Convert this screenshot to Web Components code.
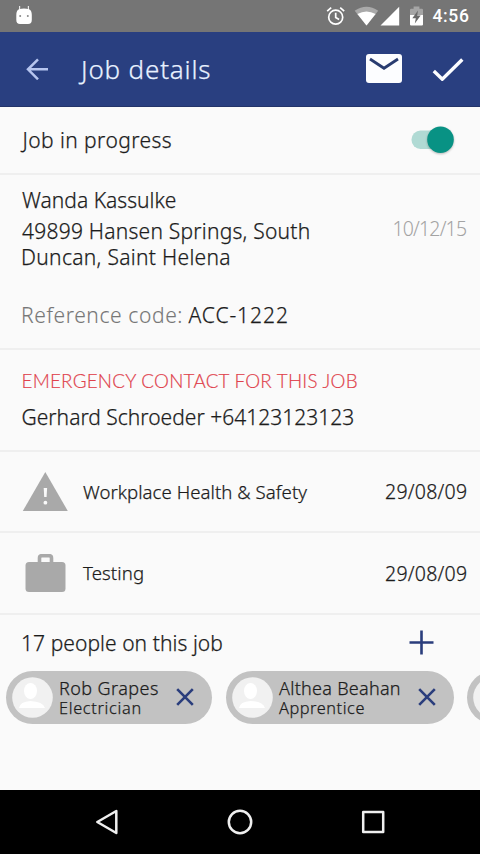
<!DOCTYPE html>
<html lang="en">
<head>
<meta charset="utf-8">
<title>Job details</title>
<style>
html,body{margin:0;height:100%;background:#fafafa;overflow:hidden}
</style>
</head>
<body>
<job-screen></job-screen>
<script>
const define = (name, html, setup) => customElements.define(name, class extends HTMLElement {
  connectedCallback() {
    if (this.shadowRoot) return;
    this.attachShadow({ mode: 'open' }).innerHTML = html;
    if (setup) setup(this, this.shadowRoot);
  }
});

/* One line of text whose tracking is spread so its glyphs span the given width. */
const pen = document.createElement('canvas').getContext('2d');
define('fit-text', `<style>
:host{display:flex;flex:none;white-space:pre;line-height:24px;color:#1c1c1c;-webkit-text-stroke:var(--stroke,.25px)}
span{display:block;flex:none}
</style><span></span>`, (el, root) => {
  const span = root.querySelector('span');
  const text = el.getAttribute('text');
  const size = +el.getAttribute('size');
  const weight = el.getAttribute('weight') || 300;
  const family = el.getAttribute('family') || '"Noto Sans"';
  const width = +el.getAttribute('width');
  span.textContent = text;
  span.style.font = `${weight} ${size}px ${family}, sans-serif`;
  span.style.lineHeight = 'inherit';
  span.style.letterSpacing = '0.01px';
  pen.font = `${weight} ${size}px ${family}, sans-serif`;
  const m = pen.measureText(text);
  const left = m.actualBoundingBoxLeft * 0.5;
  const bearings = m.width - m.actualBoundingBoxRight - left;
  const ink = span.getBoundingClientRect().width - bearings;
  span.style.letterSpacing = ((width - ink) / (text.length - 1)).toFixed(3) + 'px';
  span.style.marginLeft = left.toFixed(2) + 'px';
  el.style.width = width + 'px';
});

define('status-bar', `<style>
:host{display:flex;height:32px;background:#757575;align-items:center;box-sizing:border-box;padding:0 11px 0 16px}
svg{display:block;flex:none}
.gap{flex:1}
fit-text{color:#fff;--stroke:0}
</style>
<svg width="16" height="20" viewBox="0 0 16 20"><path d="M3.6 0v5M12.4 0v5" stroke="#e6e6e6" stroke-width="1.2"/><path d="M3 3.2Q8 2 13 3.2Q15.8 4.5 15.8 9V14Q15.8 18 12 18H4Q.3 18 .3 14V9Q.3 4.5 3 3.2Z" fill="#fff"/><circle cx="4.2" cy="10" r="1" fill="#888"/><circle cx="11.8" cy="10" r="1" fill="#888"/></svg>
<span class="gap"></span>
<svg width="148" height="32" viewBox="321 0 148 32" style="margin-right:-36.5px">
<g fill="none" stroke="#fff" stroke-width="1.7"><circle cx="335.7" cy="17.2" r="7"/><path d="M335.7 12.8v4.8l3.4 2M327.2 11.2l4-3.5M344.2 11.2l-4-3.5"/></g>
<path d="M354.7 10.8Q366.5 2.6 378.2 10.8L366.5 25.5Z" fill="#a9a9a9"/><path d="M357.4 14Q366.5 9 375.6 14L366.5 25.5Z" fill="#fff"/>
<path d="M380.5 25.5L399.2 6.8V25.5Z" fill="#fff"/>
<path d="M410 10Q410 8.8 411.2 8.8H413.6V6.6H419.4V8.8H421.8Q423 8.8 423 10V15H410Z" fill="#a5a5a5"/><path d="M410 15H423V24.5Q423 25.6 421.8 25.6H411.2Q410 25.6 410 24.5Z" fill="#fff"/><path d="M418 10.5L412.3 18.2H415.8L414.8 23.5L420.7 15.5H417.2Z" fill="#696969"/>
</svg>
<fit-text text="4:56" size="17.5" weight="500" family="Roboto" width="36.5"></fit-text>`);

define('app-bar', `<style>
:host{display:flex;height:74.5px;background:#293f80;align-items:center;box-sizing:border-box;padding:0 16px 0 26px;border-bottom:1px solid #233469}
svg{display:block;flex:none}
fit-text{color:#e8f1ff;margin-left:31.5px}
.gap{flex:1}
.check{margin-left:30px}
</style>
<svg width="22" height="22" viewBox="0 0 22 22" fill="none" stroke="#b6c5ef" stroke-width="2.5"><path d="M22 11.3H2M12 1.3L2 11.3L12 21.3"/></svg>
<fit-text text="Job details" size="26" width="130"></fit-text>
<span class="gap"></span>
<svg width="36" height="29" viewBox="0 0 36 29"><rect width="36" height="29" rx="3" fill="#fcfdff"/><path d="M4 5L18 14.2L32 5" fill="none" stroke="#293c70" stroke-width="2.8"/></svg>
<svg class="check" width="32" height="24" viewBox="0 0 32 24"><path d="M1.8 14L10.3 22.2L30.3 2.5" fill="none" stroke="#fcfdff" stroke-width="3.4"/></svg>`);

define('toggle-switch', `<style>
:host{display:block;flex:none;width:43px;height:30px}
svg{display:block;overflow:visible}
circle{filter:drop-shadow(0 1px 1px #0004)}
</style><svg width="43" height="30" viewBox="0 0 43 30"><rect x="-.5" y="5.5" width="36" height="18.5" rx="9" fill="#b0dad4"/><circle cx="28.5" cy="14.7" r="13.3" fill="#089284"/></svg>`);

define('list-section', `<style>
:host{display:flex;flex-direction:column;box-sizing:border-box;flex:none;border-bottom:2px solid #efefef;padding-left:22px;padding-right:14px}
</style><slot></slot>`);

define('record-row', `<style>
:host{display:flex;align-items:center;justify-content:space-between;flex:1}
div{display:flex;align-items:center;gap:15px}
.icon{width:46px;justify-content:center}
::slotted([slot=date]){margin-top:1.4px}
</style><div><div class="icon"><slot name="icon"></slot></div><slot></slot></div><slot name="date"></slot>`);

define('person-chip', `<style>
:host{display:flex;flex:none;box-sizing:border-box;height:53.5px;border-radius:27px;background:#c2c2c2;align-items:center;padding:0 18px 0 6px}
svg{display:block;flex:none}
.names{flex:1;margin:1.4px 0 0 6.5px;display:flex;flex-direction:column}
.names fit-text{line-height:20px;color:#1d1d1d}
</style>
<svg width="41" height="41" viewBox="0 0 41 41"><circle cx="20.5" cy="20.5" r="20.3" fill="#f1f1f1"/><g fill="#fff"><ellipse cx="18.5" cy="14" rx="6.5" ry="8"/><path d="M7 31Q8 24.5 18.5 24Q31 24.5 33 31Z"/></g></svg>
<div class="names"></div>
<svg width="18" height="18" viewBox="0 0 18 18"><path d="M1.2 1.2L16.8 16.8M16.8 1.2L1.2 16.8" stroke="#2a3d7c" stroke-width="2.6"/></svg>`, (el, root) => {
  const [name, nw, role, rw] = el.getAttribute('person').split('|');
  root.querySelector('.names').innerHTML = name ? `<fit-text text="${name}" size="18" width="${nw}"></fit-text><fit-text text="${role}" size="16.3" width="${rw}"></fit-text>` : '';
});

define('nav-bar', `<style>
:host{display:flex;height:64px;background:#000;align-items:center;justify-content:space-between;box-sizing:border-box;padding:0 95px}
svg{display:block}
g{fill:none;stroke:#efefef;stroke-width:2.5;stroke-linejoin:round}
</style>
<svg width="24" height="26" viewBox="0 0 24 26"><g><path d="M21.3 2V24L2.3 13Z"/></g></svg>
<svg width="26" height="26" viewBox="0 0 26 26"><g><circle cx="13" cy="13" r="11.2"/></g></svg>
<svg width="24" height="24" viewBox="0 0 24 24"><g><rect x="2.2" y="2" width="20" height="20"/></g></svg>`);

define('job-screen', `<style>
:host{display:flex;flex-direction:column;width:480px;height:854px;background:#fafafa;overflow:hidden}
.row{display:flex;justify-content:space-between;align-items:center}
.progress{height:68.5px;padding-right:25px;padding-top:18px}
.progress fit-text{margin-left:-.5px}
.detail{height:175px;padding-top:13px}
.head{height:82px}
.place{display:flex;flex-direction:column}
.place fit-text:first-child{margin-bottom:5.6px}
.place fit-text + fit-text{line-height:26px}
.muted{color:#a3a3a3;--stroke:0}
.label{color:#777;--stroke:.1px}
.ref{display:flex;gap:7px;margin-top:32.6px}
.emergency{height:102px;padding-top:18.8px;gap:12px}
.red{color:#e0424c;--stroke:.2px}
.health{height:81px}
.testing{height:82px}
.people{display:flex;justify-content:space-between;align-items:center;padding:15px 46px 0 22px;height:25px}
.chips{display:flex;gap:13.5px;padding-left:6px;margin-top:15.7px;overflow:hidden;flex:none}
.space{flex:1}
svg{display:block}
</style>
<status-bar></status-bar>
<app-bar></app-bar>
<list-section class="progress"><div class="row"><fit-text text="Job in progress" size="21" width="149.5"></fit-text><toggle-switch></toggle-switch></div></list-section>
<list-section class="detail">
<div class="row head"><div class="place"><fit-text text="Wanda Kassulke" size="21" width="154"></fit-text><fit-text text="49899 Hansen Springs, South" size="21" width="287"></fit-text><fit-text text="Duncan, Saint Helena" size="21" width="207.5"></fit-text></div><fit-text class="muted" text="10/12/15" size="19.5" width="73"></fit-text></div>
<div class="ref"><fit-text class="label" text="Reference code:" size="21" width="159.5"></fit-text><fit-text text="ACC-1222" size="21" width="98.5"></fit-text></div>
</list-section>
<list-section class="emergency"><fit-text class="red" text="EMERGENCY CONTACT FOR THIS JOB" size="18.8" family="Lato" width="335"></fit-text><fit-text text="Gerhard Schroeder +64123123123" size="21" width="331.5"></fit-text></list-section>
<list-section class="health"><record-row>
<svg slot="icon" width="46" height="40" viewBox="0 0 46 40"><path d="M23.3 0L45.8 39H.8Z" fill="#a9a9a9"/><path d="M21.7 16h3.4l-.5 9h-2.4z" fill="#fafafa"/><circle cx="23.4" cy="30.7" r="1.9" fill="#fafafa"/></svg>
<fit-text text="Workplace Health &amp; Safety" size="18.6" width="224.5"></fit-text><fit-text slot="date" text="29/08/09" size="19.5" width="80.5"></fit-text></record-row></list-section>
<list-section class="testing"><record-row>
<svg slot="icon" width="41" height="39" viewBox="0 0 41 39"><rect x="0.5" y="8" width="40" height="30" rx="3.5" fill="#a9a9a9"/><path d="M14.5 9.5V4Q14.5 1.7 16.8 1.7H24.2Q26.5 1.7 26.5 4V9.5" fill="none" stroke="#a9a9a9" stroke-width="3.6"/></svg>
<fit-text text="Testing" size="18.6" width="60"></fit-text><fit-text slot="date" text="29/08/09" size="19.5" width="80.5"></fit-text></record-row></list-section>
<div class="people"><fit-text text="17 people on this job" size="21" width="200.5"></fit-text><svg width="25" height="25" viewBox="0 0 25 25"><path d="M12.5 .5V24.5M.5 12.5H24.5" stroke="#2a3d7c" stroke-width="2.6"/></svg></div>
<div class="chips"><person-chip style="width:206px" person="Rob Grapes|98.5|Electrician|81"></person-chip><person-chip style="width:228px" person="Althea Beahan|121|Apprentice|85.5"></person-chip><person-chip style="width:206px" person="|||"></person-chip></div>
<div class="space"></div>
<nav-bar></nav-bar>`);
</script>
</body>
</html>
